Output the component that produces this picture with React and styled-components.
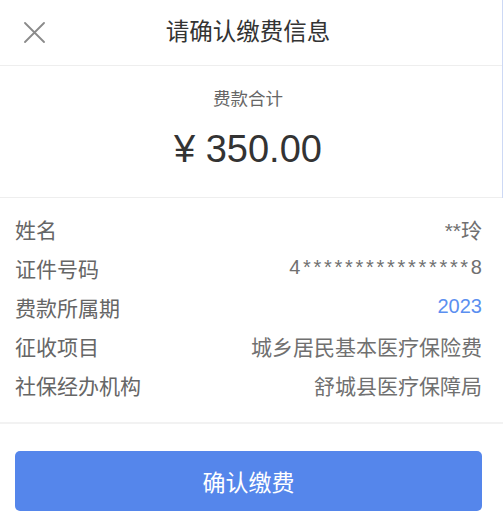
import React from 'react'
import styled, { createGlobalStyle } from 'styled-components'

const GlobalStyle = createGlobalStyle`
  html, body {
    margin: 0;
    padding: 0;
    background: #fff;
  }
  body {
    font-family: "Liberation Sans", "Noto Sans CJK SC", sans-serif;
    color: #333;
  }
`

const rows = [
  { label: '姓名', value: '**玲' },
  { label: '证件号码', value: '4****************8', masked: true },
  { label: '费款所属期', value: '2023', accent: true },
  { label: '征收项目', value: '城乡居民基本医疗保险费' },
  { label: '社保经办机构', value: '舒城县医疗保障局' },
]

function CloseIcon() {
  return (
    <svg width="21" height="21" viewBox="0 0 21 21" fill="none">
      <path d="M1 1L20 20M20 1L1 20" stroke="#8a8a8a" strokeWidth="1.8" strokeLinecap="round" />
    </svg>
  )
}

function App() {
  return (
    <Page>
      <GlobalStyle />
      <Top>
        <Header>
          <CloseButton>
            <CloseIcon />
          </CloseButton>
          <Title>请确认缴费信息</Title>
          <span />
        </Header>
        <Total>
          <TotalLabel>费款合计</TotalLabel>
          <Amount>¥ 350.00</Amount>
        </Total>
      </Top>

      <Details>
        {rows.map((row) => (
          <Row key={row.label}>
            <Label>{row.label}</Label>
            <Value $accent={row.accent} $masked={row.masked}>{row.value}</Value>
          </Row>
        ))}
      </Details>

      <Footer>
        <ConfirmButton>确认缴费</ConfirmButton>
      </Footer>
    </Page>
  )
}

const Page = styled.div`
  width: 503px;
  min-height: 529px;
  background: #fff;
`

const Top = styled.div`
  border-right: 1px solid #cdd9f5;
`

const Header = styled.header`
  display: grid;
  grid-template-columns: 70px 1fr 76px;
  align-items: center;
  height: 65px;
  border-bottom: 1px solid #eeeeee;
`

const CloseButton = styled.div`
  display: flex;
  align-items: center;
  padding-left: 24px;
  height: 21px;
`

const Title = styled.h1`
  margin: 0;
  text-align: center;
  font-size: 23.5px;
  font-weight: 400;
  color: #333;
  line-height: 1;
`

const Total = styled.section`
  display: flex;
  flex-direction: column;
  align-items: center;
  height: 131px;
  padding-right: 6px;
  border-bottom: 1px solid #eeeeee;
`

const TotalLabel = styled.div`
  margin-top: 22px;
  font-size: 17.5px;
  line-height: 22px;
  color: #666;
`

const Amount = styled.div`
  margin-top: 11px;
  font-size: 38px;
  line-height: 56px;
  color: #333;
`

const Details = styled.section`
  padding: 11px 21px 18px 15px;
  border-bottom: 2px solid #f2f2f2;
`

const Row = styled.div`
  display: flex;
  justify-content: space-between;
  align-items: center;
  height: 39px;
  font-size: 21px;
`

const Label = styled.span`
  color: #666;
`

const Value = styled.span`
  color: ${(p) => (p.$accent ? '#5b8ff0' : '#707070')};
  font-size: ${(p) => (p.$masked || p.$accent ? '20px' : '21px')};
  letter-spacing: ${(p) => (p.$masked ? '2.7px' : '0')};
  margin-right: ${(p) => (p.$masked ? '-2.7px' : '0')};
`

const Footer = styled.div`
  padding: 27px 21px 0 15px;
`

const ConfirmButton = styled.button`
  display: block;
  width: 100%;
  height: 60px;
  border: none;
  border-radius: 5px;
  background: #5586eb;
  color: #fff;
  font-family: "Liberation Sans", "Noto Sans CJK SC", sans-serif;
  font-size: 23px;
  cursor: pointer;
`

export default App
